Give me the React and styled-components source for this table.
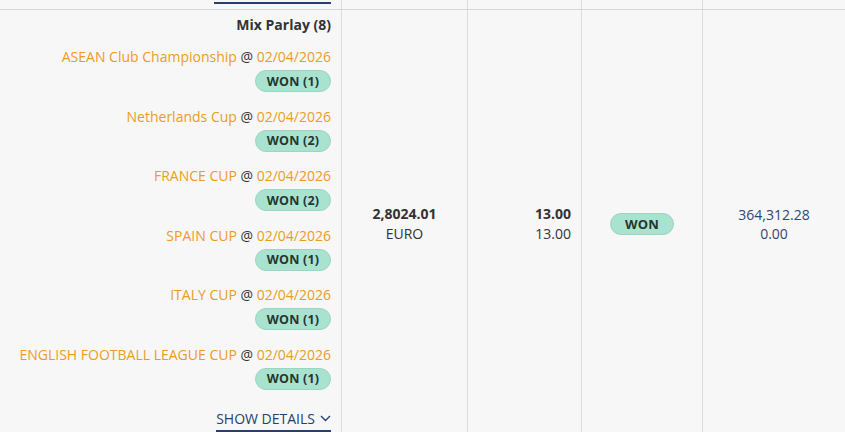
import React from 'react';
import styled, { createGlobalStyle } from 'styled-components';

const Global = createGlobalStyle`
  html, body { margin: 0; padding: 0; background: #f7f7f7; }
  body { font-family: "Open Sans", "Noto Sans", sans-serif; font-size: 14px; color: #333; }
`;

const Table = styled.div`
  display: grid;
  grid-template-columns: 342px 126px 114px 121px 1fr;
  width: 845px;
  background: #f7f7f7;
`;

const Cell = styled.div`
  border-right: ${p => (p.$last ? 'none' : '1px solid #dcdcdc')};
  border-bottom: ${p => (p.$head ? '1px solid #d6d6d6' : 'none')};
  display: flex;
  flex-direction: column;
  justify-content: ${p => (p.$top ? 'flex-start' : 'center')};
  align-items: ${p => p.$align || 'center'};
  padding: ${p => p.$pad || '0 10px'};
  box-sizing: border-box;
  height: ${p => p.$h || 'auto'};
`;

const PrevLink = styled.div`
  width: 117px;
  height: 2px;
  margin-top: 2px;
  background: #25406e;
`;

const Title = styled.div`
  font-weight: 700;
  font-size: 14px;
  color: #333;
  margin-top: 2px;
  line-height: 20px;
`;

const Leg = styled.div`
  display: flex;
  flex-direction: column;
  align-items: flex-end;
  margin-top: ${p => (p.$first ? '12px' : '14.6px')};
`;

const LegText = styled.div`
  font-size: 14px;
  line-height: 20px;
  color: #333;
  white-space: nowrap;
`;

const Orange = styled.span`
  color: #ee9b23;
`;

const Badge = styled.div`
  display: inline-flex;
  align-items: center;
  justify-content: center;
  height: 22px;
  min-width: ${p => p.$w || '76px'};
  box-sizing: border-box;
  margin-top: ${p => p.$mt || '3px'};
  border-radius: 11px;
  background: #a9e2cf;
  border: 1px solid #9bd6c2;
  color: #263530;
  font-weight: 700;
  font-size: ${p => p.$fs || '12.5px'};
  letter-spacing: 0.2px;
`;

const ShowDetails = styled.button`
  margin-top: 20px;
  background: none;
  border: none;
  border-bottom: 2px solid #25406e;
  padding: 0 0 2px 0;
  font-family: inherit;
  font-size: 14px;
  line-height: 18px;
  color: #25406e;
  display: flex;
  align-items: center;
  gap: 5px;
  cursor: pointer;
`;

const Stake = styled.div`
  font-weight: ${p => (p.$bold ? 700 : 400)};
  font-size: 14px;
  line-height: 20px;
  color: #333;
`;

const Money = styled.div`
  font-size: 14px;
  line-height: 19px;
  color: #2c4874;
`;

const legs = [
  ['ASEAN Club Championship', 1],
  ['Netherlands Cup', 2],
  ['FRANCE CUP', 2],
  ['SPAIN CUP', 1],
  ['ITALY CUP', 1],
  ['ENGLISH FOOTBALL LEAGUE CUP', 1],
];

const Chevron = () => (
  <svg width="11" height="7" viewBox="0 0 11 7" fill="none">
    <path d="M1 1l4.5 4.5L10 1" stroke="#25406e" strokeWidth="1.4" />
  </svg>
);

export default function App() {
  return (
    <>
      <Global />
      <Table>
        <Cell $head $h="10px" $align="flex-end" $top>
          <PrevLink />
        </Cell>
        <Cell $head $h="10px" />
        <Cell $head $h="10px" />
        <Cell $head $h="10px" />
        <Cell $head $last $h="10px" />

        <Cell $align="flex-end" $top $pad="3px 10px 0 10px" $h="422px">
          <Title>Mix Parlay (8)</Title>
          {legs.map(([name, n], i) => (
            <Leg key={name} $first={i === 0}>
              <LegText>
                <Orange>{name}</Orange> @ <Orange>02/04/2026</Orange>
              </LegText>
              <Badge>WON ({n})</Badge>
            </Leg>
          ))}
          <ShowDetails>
            SHOW DETAILS <Chevron />
          </ShowDetails>
        </Cell>
        <Cell $pad="6px 10px 0 10px">
          <Stake $bold>2,8024.01</Stake>
          <Stake>EURO</Stake>
        </Cell>
        <Cell $align="flex-end" $pad="6px 10px 0 10px">
          <Stake $bold>13.00</Stake>
          <Stake>13.00</Stake>
        </Cell>
        <Cell $pad="6px 10px 0 10px">
          <Badge $w="64px" $mt="0" $fs="13px">WON</Badge>
        </Cell>
        <Cell $last $pad="6px 10px 0 10px">
          <Money>364,312.28</Money>
          <Money>0.00</Money>
        </Cell>
      </Table>
    </>
  );
}
